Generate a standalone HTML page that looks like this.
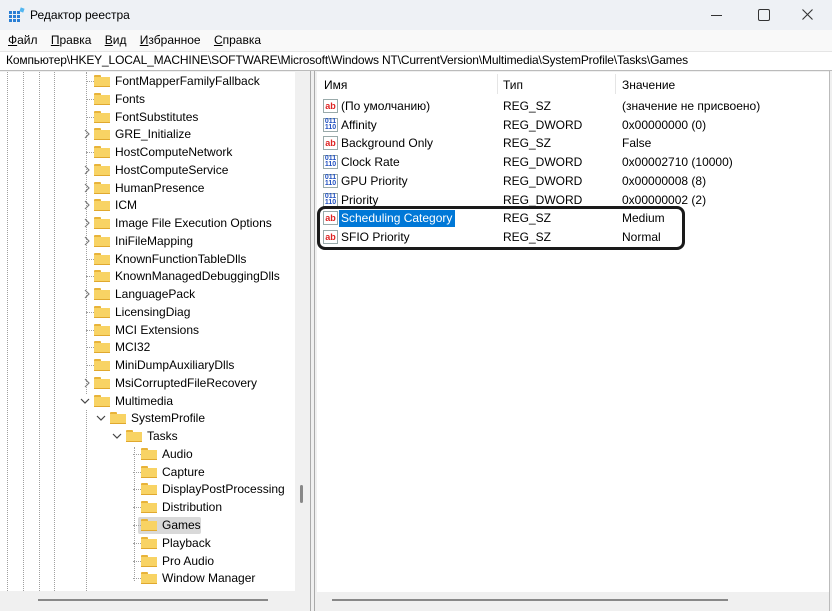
<!DOCTYPE html><html><head><meta charset="utf-8"><style>
body{margin:0;width:832px;height:611px;overflow:hidden;background:#fff;font-family:"Liberation Sans",sans-serif;font-size:12px;color:#000;position:relative}
.a{position:absolute;white-space:nowrap}
.f{position:absolute;width:16px;height:12px}
.f:before{content:"";position:absolute;left:0;top:0;width:7px;height:3px;background:#e8b339;border-radius:1px 1px 0 0}
.f:after{content:"";position:absolute;left:0;top:2px;width:16px;height:10px;background:#f8d364;border-bottom:1px solid #e0a82e;box-sizing:border-box}
.vl{position:absolute;width:0;border-left:1px dotted #a0a0a0}
.hl{position:absolute;height:0;border-top:1px dotted #a0a0a0;width:8px}
.ch{position:absolute}
.ic{position:absolute;width:15px;height:14px;font-size:9px;font-weight:bold;line-height:12px;text-align:center;border:1px solid #9aa;box-sizing:border-box;background:#fff}
.ab{color:#d22}.bin{color:#2050c0;font-size:7px;line-height:6px}
</style></head><body>
<div class="a" style="left:0;top:0;width:832px;height:30px;background:#eef1f5"></div>
<svg class="a" style="left:9px;top:7px" width="16" height="16"><g fill="#2a7fd4"><rect x="0" y="4" width="3" height="3"/><rect x="4" y="4" width="3" height="3"/><rect x="8" y="4" width="3" height="3"/><rect x="0" y="8" width="3" height="3"/><rect x="4" y="8" width="3" height="3"/><rect x="8" y="8" width="3" height="3"/><rect x="0" y="12" width="3" height="3"/><rect x="4" y="12" width="3" height="3"/><rect x="8" y="12" width="3" height="3"/></g><rect x="11" y="1" width="4" height="4" fill="#52b6f0" transform="rotate(20 13 3)"/></svg>
<div class="a" style="left:30px;top:8px;font-size:12px">Редактор реестра</div>
<div class="a" style="left:711px;top:15px;width:11px;height:1px;background:#333"></div>
<div class="a" style="left:758px;top:9px;width:10px;height:10px;border:1px solid #333;border-radius:2px"></div>
<svg class="a" style="left:802px;top:9px" width="11" height="11"><path d="M0.5 0.5L10.5 10.5M10.5 0.5L0.5 10.5" stroke="#333" stroke-width="1.1"/></svg>
<div class="a" style="left:0;top:30px;width:832px;height:21px;background:#f9f9f9"></div>
<div class="a" style="left:8px;top:33px"><u>Ф</u>айл&nbsp;&nbsp;&nbsp;&nbsp;<u>П</u>равка&nbsp;&nbsp;&nbsp;&nbsp;<u>В</u>ид&nbsp;&nbsp;&nbsp;&nbsp;<u>И</u>збранное&nbsp;&nbsp;&nbsp;&nbsp;<u>С</u>правка</div>
<div class="a" style="left:0;top:51px;width:832px;height:18px;border-bottom:1px solid #bbb;border-top:1px solid #e5e5e5"></div>
<div class="a" style="left:6px;top:53px;letter-spacing:-0.15px">Компьютер\HKEY_LOCAL_MACHINE\SOFTWARE\Microsoft\Windows NT\CurrentVersion\Multimedia\SystemProfile\Tasks\Games</div>
<div class="a" style="left:0;top:71px;width:832px;height:540px;background:#f0f0f0"></div>
<div class="a" style="left:0;top:72px;width:295px;height:519px;background:#fff"></div>
<div class="a" style="left:300px;top:485px;width:3px;height:18px;background:#888;border-radius:2px"></div>
<div class="a" style="left:38px;top:599px;width:230px;height:2px;background:#888"></div>
<div class="a" style="left:310px;top:71px;width:1px;height:540px;background:#aaa"></div>
<div class="a" style="left:314px;top:71px;width:1px;height:540px;background:#aaa"></div>
<div class="a" style="left:317px;top:72px;width:512px;height:520px;background:#fff"></div>
<div class="a" style="left:332px;top:599px;width:396px;height:2px;background:#888"></div>
<div class="a" style="left:829px;top:71px;width:1px;height:540px;background:#bbb"></div>
<div class="vl" style="left:7px;top:72px;height:519px"></div>
<div class="vl" style="left:23px;top:72px;height:519px"></div>
<div class="vl" style="left:39px;top:72px;height:519px"></div>
<div class="vl" style="left:54px;top:72px;height:519px"></div>
<div class="vl" style="left:86px;top:72px;height:322px"></div>
<div class="vl" style="left:86px;top:410px;height:181px"></div>
<div class="vl" style="left:134px;top:447px;height:134px"></div>
<div class="a" style="left:138px;top:517px;width:63px;height:17px;background:#d9d9d9;border-radius:2px"></div>
<div class="a" style="left:339px;top:210px;width:116px;height:17px;background:#0078d7"></div>
<div id="tree"></div>
<div class="vl" style="left:497px;top:74px;height:20px;border-left:1px solid #e5e5e5"></div>
<div class="vl" style="left:615px;top:74px;height:20px;border-left:1px solid #e5e5e5"></div>
<div class="a" style="left:324px;top:78px">Имя</div>
<div class="a" style="left:503px;top:78px">Тип</div>
<div class="a" style="left:622px;top:78px">Значение</div>
<div id="vals"></div>
<div class="a" style="left:317px;top:206px;width:368px;height:44px;border:3px solid #1a1a1a;border-radius:8px;box-sizing:border-box"></div>
<script>
var t=[[5,'FontMapperFamilyFallback',0],[5,'Fonts',0],[5,'FontSubstitutes',0],[5,'GRE_Initialize',1],[5,'HostComputeNetwork',0],[5,'HostComputeService',1],[5,'HumanPresence',1],[5,'ICM',1],[5,'Image File Execution Options',1],[5,'IniFileMapping',1],[5,'KnownFunctionTableDlls',0],[5,'KnownManagedDebuggingDlls',0],[5,'LanguagePack',1],[5,'LicensingDiag',0],[5,'MCI Extensions',0],[5,'MCI32',0],[5,'MiniDumpAuxiliaryDlls',0],[5,'MsiCorruptedFileRecovery',1],[5,'Multimedia',2],[6,'SystemProfile',2],[7,'Tasks',2],[8,'Audio',0],[8,'Capture',0],[8,'DisplayPostProcessing',0],[8,'Distribution',0],[8,'Games',0],[8,'Playback',0],[8,'Pro Audio',0],[8,'Window Manager',0]];
var h='';t.forEach(function(r,i){var y=81+i*17.76;var fx=[0,0,0,0,0,94,110,126,141][r[0]];
if(r[2]==1)h+='<svg class="ch" style="left:'+(fx-11)+'px;top:'+(y-5)+'px" width="8" height="10"><path d="M2 1L6 5L2 9" fill="none" stroke="#777" stroke-width="1.1"/></svg>';
else if(r[2]==2)h+='<svg class="ch" style="left:'+(fx-14)+'px;top:'+(y-4)+'px" width="10" height="8"><path d="M1 2L5 6L9 2" fill="none" stroke="#444" stroke-width="1.2"/></svg>';
else h+='<div class="hl" style="left:'+(fx-8)+'px;top:'+y+'px"></div>';
h+='<div class="f" style="left:'+fx+'px;top:'+(y-6)+'px"></div><div class="a" style="left:'+(fx+21)+'px;top:'+(y-7)+'px">'+r[1]+'</div>';});
document.getElementById('tree').innerHTML=h;
var v=[['(По умолчанию)','REG_SZ','(значение не присвоено)'],['Affinity','REG_DWORD','0x00000000 (0)'],['Background Only','REG_SZ','False'],['Clock Rate','REG_DWORD','0x00002710 (10000)'],['GPU Priority','REG_DWORD','0x00000008 (8)'],['Priority','REG_DWORD','0x00000002 (2)'],['Scheduling Category','REG_SZ','Medium'],['SFIO Priority','REG_SZ','Normal']];
h='';v.forEach(function(r,i){var y=106+i*18.7;var b=r[1]=='REG_DWORD';
h+='<div class="ic '+(b?'bin':'ab')+'" style="left:323px;top:'+(y-7)+'px">'+(b?'011<br>110':'ab')+'</div>';
h+='<div class="a" style="left:341px;top:'+(y-7)+'px;'+(i==6?'color:#fff':'')+'">'+r[0]+'</div><div class="a" style="left:503px;top:'+(y-7)+'px">'+r[1]+'</div><div class="a" style="left:622px;top:'+(y-7)+'px">'+r[2]+'</div>';});
document.getElementById('vals').innerHTML=h;
</script>
</body></html>
